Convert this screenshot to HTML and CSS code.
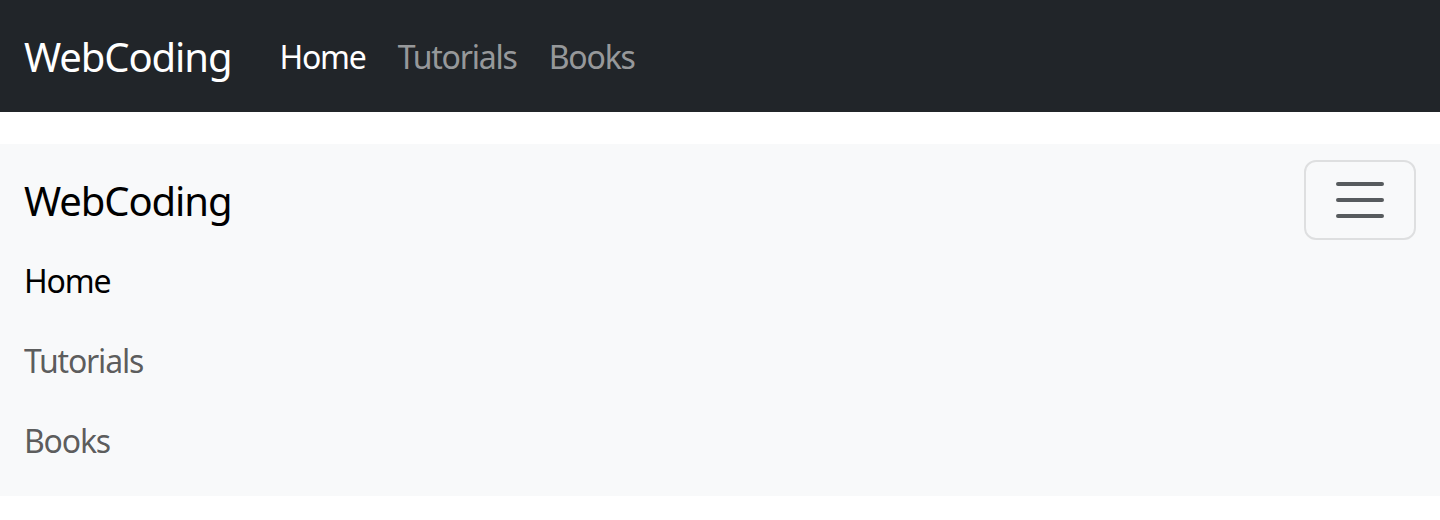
FILE: index.html
```html
<!DOCTYPE html>
<html lang="en">
<head>
<meta charset="utf-8">
<title>Navbar</title>
<link rel="stylesheet" href="styles.css">
</head>
<body>
<nav class="navbar navbar-dark">
  <div class="container">
    <a class="brand" href="#">WebCoding</a>
    <ul class="nav">
      <li><a class="nav-link active" href="#">Home</a></li>
      <li><a class="nav-link" href="#">Tutorials</a></li>
      <li><a class="nav-link" href="#">Books</a></li>
    </ul>
  </div>
</nav>
<nav class="navbar navbar-light">
  <div class="container wrap">
    <a class="brand" href="#">WebCoding</a>
    <button class="toggler" type="button" aria-label="Toggle navigation">
      <svg class="toggler-icon" viewBox="0 0 30 30" width="60" height="60"><path d="M4 7h22M4 15h22M4 23h22" stroke="rgba(33,37,41,0.75)" stroke-width="2" stroke-linecap="round" stroke-miterlimit="10"/></svg>
    </button>
    <ul class="nav nav-col">
      <li><a class="nav-link active" href="#">Home</a></li>
      <li><a class="nav-link" href="#">Tutorials</a></li>
      <li><a class="nav-link" href="#">Books</a></li>
    </ul>
  </div>
</nav>
</body>
</html>
```

FILE: styles.css
```css
* { box-sizing: border-box; }
body {
  margin: 0;
  font-family: "Noto Sans", "Open Sans", sans-serif;
  background: #fff;
}
.navbar {
  padding: 16px 0;
}
.navbar-dark { background: #212529; }
.navbar-light { background: #f8f9fa; margin-top: 32px; }
.container {
  display: flex;
  align-items: center;
  padding: 0 24px;
}
.wrap {
  flex-wrap: wrap;
  justify-content: space-between;
}
.brand {
  font-size: 40px;
  line-height: 60px;
  letter-spacing: -1.1px;
  padding: 11px 0 9px;
  margin-right: 32px;
  text-decoration: none;
  white-space: nowrap;
}
.navbar-dark .brand { color: #fff; }
.navbar-light .brand { color: #000; }
.nav {
  list-style: none;
  margin: 0;
  padding: 0;
  display: flex;
}
.nav-link {
  display: block;
  font-size: 32px;
  line-height: 48px;
  letter-spacing: -1.2px;
  padding: 17px 16px 15px;
  text-decoration: none;
}
.navbar-dark .nav-link { color: rgba(255,255,255,0.55); }
.navbar-dark .nav-link.active { color: #fff; }
.nav-col {
  flex-direction: column;
  flex-basis: 100%;
}
.nav-col .nav-link { padding: 17px 0 15px; }
.navbar-light .nav-link { color: rgba(0,0,0,0.65); }
.navbar-light .nav-link.active { color: #000; }
.toggler {
  width: 112px;
  height: 80px;
  padding: 8px 24px;
  background: transparent;
  border: 2px solid rgba(0,0,0,0.1);
  border-radius: 12px;
  display: flex;
  align-items: center;
  justify-content: center;
}
.toggler-icon { display: block; }
```
